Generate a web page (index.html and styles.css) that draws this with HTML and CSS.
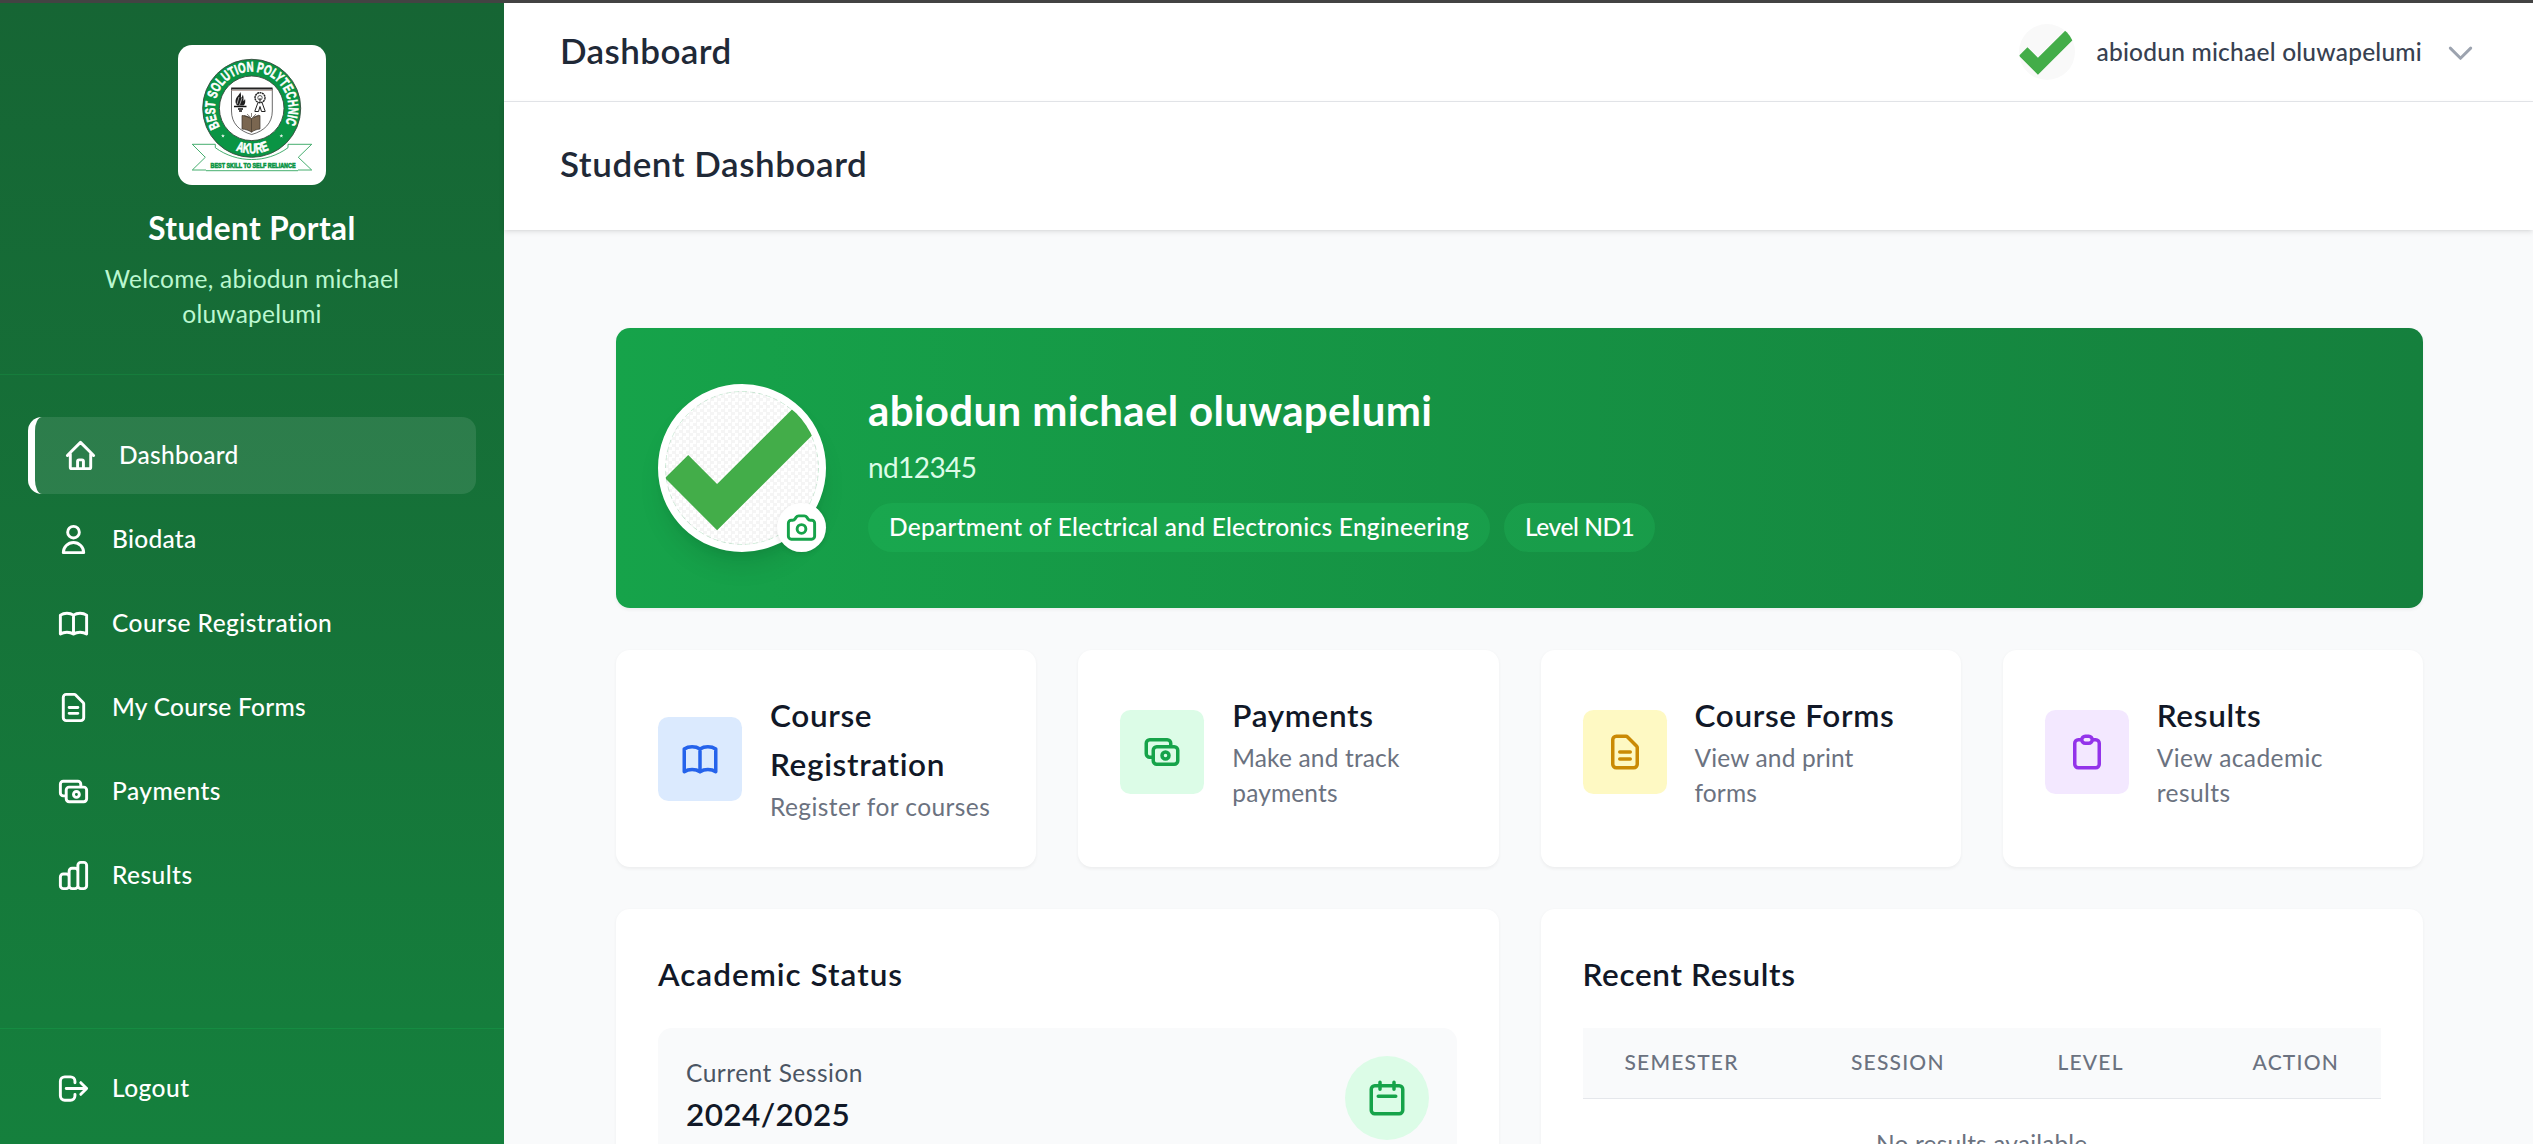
FILE: index.html
```
<!DOCTYPE html>
<html lang="en">
<head>
<meta charset="utf-8">
<title>Student Dashboard</title>
<link rel="stylesheet" href="styles.css">
</head>
<body>
<svg class="defs" aria-hidden="true">
  <symbol id="i-home" viewBox="0 0 24 24"><path d="M3 12l2-2m0 0l7-7 7 7M5 10v10a1 1 0 001 1h3m10-11l2 2m-2-2v10a1 1 0 01-1 1h-3m-6 0a1 1 0 001-1v-4a1 1 0 011-1h2a1 1 0 011 1v4a1 1 0 001 1m-6 0h6"/></symbol>
  <symbol id="i-user" viewBox="0 0 24 24"><path d="M16 7a4 4 0 11-8 0 4 4 0 018 0zM12 14a7 7 0 00-7 7h14a7 7 0 00-7-7z"/></symbol>
  <symbol id="i-book" viewBox="0 0 24 24"><path d="M12 6.253v13m0-13C10.832 5.477 9.246 5 7.5 5S4.168 5.477 3 6.253v13C4.168 18.477 5.754 18 7.5 18s3.332.477 4.5 1.253m0-13C13.168 5.477 14.754 5 16.5 5c1.747 0 3.332.477 4.5 1.253v13C19.832 18.477 18.247 18 16.5 18c-1.746 0-3.332.477-4.5 1.253"/></symbol>
  <symbol id="i-doc" viewBox="0 0 24 24"><path d="M9 12h6m-6 4h6m2 5H7a2 2 0 01-2-2V5a2 2 0 012-2h5.586a1 1 0 01.707.293l5.414 5.414a1 1 0 01.293.707V19a2 2 0 01-2 2z"/></symbol>
  <symbol id="i-cash" viewBox="0 0 24 24"><path d="M17 9V7a2 2 0 00-2-2H5a2 2 0 00-2 2v6a2 2 0 002 2h2m2 4h10a2 2 0 002-2v-6a2 2 0 00-2-2H9a2 2 0 00-2 2v6a2 2 0 002 2zm7-5a2 2 0 11-4 0 2 2 0 014 0z"/></symbol>
  <symbol id="i-chart" viewBox="0 0 24 24"><path d="M9 19v-6a2 2 0 00-2-2H5a2 2 0 00-2 2v6a2 2 0 002 2h2a2 2 0 002-2zm0 0V9a2 2 0 012-2h2a2 2 0 012 2v10m-6 0a2 2 0 002 2h2a2 2 0 002-2m0 0V5a2 2 0 012-2h2a2 2 0 012 2v14a2 2 0 01-2 2h-2a2 2 0 01-2-2z"/></symbol>
  <symbol id="i-logout" viewBox="0 0 24 24"><path d="M17 16l4-4m0 0l-4-4m4 4H7m6 4v1a3 3 0 01-3 3H6a3 3 0 01-3-3V7a3 3 0 013-3h4a3 3 0 013 3v1"/></symbol>
  <symbol id="i-camera" viewBox="0 0 24 24"><path d="M3 9a2 2 0 012-2h.93a2 2 0 001.664-.89l.812-1.22A2 2 0 0110.07 4h3.86a2 2 0 011.664.89l.812 1.22A2 2 0 0018.07 7H19a2 2 0 012 2v9a2 2 0 01-2 2H5a2 2 0 01-2-2V9z"/><path d="M15 13a3 3 0 11-6 0 3 3 0 016 0z"/></symbol>
  <symbol id="i-clipboard" viewBox="0 0 24 24"><path d="M9 5H7a2 2 0 00-2 2v12a2 2 0 002 2h10a2 2 0 002-2V7a2 2 0 00-2-2h-2M9 5a2 2 0 002 2h2a2 2 0 002-2M9 5a2 2 0 012-2h2a2 2 0 012 2"/></symbol>
  <symbol id="i-calendar" viewBox="0 0 24 24"><path d="M8 7V3m8 4V3m-9 8h10M5 21h14a2 2 0 002-2V7a2 2 0 00-2-2H5a2 2 0 00-2 2v12a2 2 0 002 2z"/></symbol>
  <symbol id="i-chevron" viewBox="0 0 24 24"><path d="M19 9l-7 7-7-7"/></symbol>
  <symbol id="i-tick" viewBox="0 0 154 154"><path d="M23.2 64L52.1 93 134 11.4 158 33.5 52.1 139.3 0 87z" fill="#43ad49" stroke="none"/></symbol>
</svg>

<div class="app">
  <aside class="sidebar">
    <div class="brand">
      <svg class="logo" viewBox="0 0 148 140" role="img" aria-label="Best Solution Polytechnic, Akure">
        <path d="M28 125.7h92M28 125L14.3 125 27.3 112.3 14.3 99.3H37.3V102.7C59 118.5 88.5 118.5 110 102.7V99.3H133.7L120.3 112.3 133.7 125H120" fill="none" stroke="#16994a" stroke-width=".8"/>
        <circle cx="73.7" cy="63.3" r="49" fill="#0a9444" stroke="#3a4a3e" stroke-width=".9"/>
        <circle cx="73.7" cy="63.3" r="32.3" fill="#fff" stroke="#3a4a3e" stroke-width=".9"/>
        <path id="arc-top" d="M41.8 81.7A36.8 36.8 0 1 1 105.6 81.7" fill="none"/>
        <path id="arc-bottom" d="M49.2 101.2A45.200 45.200 0 0 0 98.2 101.2" fill="none"/>
        <text class="logo-ring"><textPath href="#arc-top" textLength="150" lengthAdjust="spacingAndGlyphs">BEST SOLUTION POLYTECHNIC</textPath></text>
        <text class="logo-ring"><textPath href="#arc-bottom" startOffset="9.500" textLength="34" lengthAdjust="spacingAndGlyphs">AKURE</textPath></text>
        <path d="M44.9 89l.6 1.2 1.3.1-1 .9.3 1.3-1.2-.7-1.1.7.3-1.3-1-.9 1.3-.1zM103.3 89l.6 1.2 1.3.1-1 .9.3 1.3-1.2-.7-1.1.7.3-1.3-1-.9 1.3-.1z" fill="#e4f5ea"/>
        <path d="M53.5 43.5V66C53.5 78 61 86 73.7 89.5 86.5 86 94.3 78 94.3 66V43.5" fill="#fff" stroke="#444" stroke-width=".8"/>
        <path d="M53.2 43.5H94.5" stroke="#222" stroke-width="2"/>
        <path d="M53.2 45.4H94.5" stroke="#a58f86" stroke-width=".8"/>
        <path d="M62.5 47c-1 3-5 5-5 9.5 0 2 1 3.5 2 4h6c2-1.5 2-4 1.5-7-.2 1.5-1 2-1.7 2.5.5-2.5.3-5-.6-6.500-.2 2-1 3-1.8 3.5.3-2 .2-4-.4-6z" fill="#1d1d1d"/>
        <path d="M61 52l-2 7M64 53l-2.500 7" stroke="#fff" stroke-width=".6"/>
        <path d="M56 61.500h12.500M60 64h5M61 66h3" stroke="#111" stroke-width="1.600"/>
        <circle cx="82" cy="52.7" r="5" fill="none" stroke="#222" stroke-width="1.4" stroke-dasharray="2 .5"/>
        <circle cx="82" cy="52.7" r="2.2" fill="none" stroke="#333" stroke-width=".8"/>
        <path d="M82 53v5M80 57.5l-3.300 9M84 57.5l3.300 9M77 66.500h3.500l1.500-5 1.500 5H87" fill="none" stroke="#222" stroke-width="1"/>
        <path d="M64 70.5c3.500.2 7 1 9.500 3 2.500-2 5.500-2.800 8.500-3V84c-3 .3-6 1.300-8.500 3.300-2.500-2-6-3-9.500-3.300z" fill="#7a6650" stroke="#3b3228" stroke-width=".7"/>
        <path d="M73.500 73.500V87M66 70.500l6 2.500M69 69l3.800 3.500M73.500 68v4M78 69l-3.500 3.500M81 70l-5.500 2.800" stroke="#3b3228" stroke-width=".6"/>
        <text class="logo-motto" x="32.5" y="122.6" textLength="85" lengthAdjust="spacingAndGlyphs">BEST SKILL TO SELF RELIANCE</text>
      </svg>
      <h1 class="brand-title">Student Portal</h1>
      <p class="brand-sub">Welcome, abiodun michael oluwapelumi</p>
    </div>
    <nav class="nav">
      <a class="nav-item active"><svg class="icon"><use href="#i-home"/></svg><span>Dashboard</span></a>
      <a class="nav-item"><svg class="icon"><use href="#i-user"/></svg><span>Biodata</span></a>
      <a class="nav-item"><svg class="icon"><use href="#i-book"/></svg><span class="wide">Course Registration</span></a>
      <a class="nav-item"><svg class="icon"><use href="#i-doc"/></svg><span>My Course Forms</span></a>
      <a class="nav-item"><svg class="icon"><use href="#i-cash"/></svg><span class="wide">Payments</span></a>
      <a class="nav-item"><svg class="icon"><use href="#i-chart"/></svg><span class="wide">Results</span></a>
    </nav>
    <div class="sidebar-foot">
      <a class="nav-item"><svg class="icon"><use href="#i-logout"/></svg><span class="wide">Logout</span></a>
    </div>
  </aside>

  <div class="main">
    <header class="topbar">
      <h2 class="page-title">Dashboard</h2>
      <div class="account">
        <span class="avatar-sm"><svg><use href="#i-tick"/></svg></span>
        <span class="account-name">abiodun michael oluwapelumi</span>
        <svg class="icon chevron"><use href="#i-chevron"/></svg>
      </div>
    </header>
    <div class="subheader"><h2 class="page-title">Student Dashboard</h2></div>

    <main class="content">
      <section class="hero">
        <div class="avatar-wrap">
          <div class="avatar"><svg viewBox="0 0 154 154"><use href="#i-tick"/><circle class="hairline" cx="77" cy="77" r="76.500"/></svg></div>
          <span class="camera"><svg class="icon"><use href="#i-camera"/></svg></span>
        </div>
        <div class="hero-text">
          <h1 class="hero-name">abiodun michael oluwapelumi</h1>
          <p class="hero-id">nd12345</p>
          <div class="pills"><span class="pill">Department of Electrical and Electronics Engineering</span><span class="pill level">Level ND1</span></div>
        </div>
      </section>

      <section class="cards">
        <a class="card"><span class="tile blue"><svg class="icon"><use href="#i-book"/></svg></span><span class="card-text"><strong>Course Registration</strong><small class="wide">Register for courses</small></span></a>
        <a class="card"><span class="tile green"><svg class="icon"><use href="#i-cash"/></svg></span><span class="card-text"><strong>Payments</strong><small>Make and track payments</small></span></a>
        <a class="card"><span class="tile yellow"><svg class="icon"><use href="#i-doc"/></svg></span><span class="card-text"><strong>Course Forms</strong><small>View and print forms</small></span></a>
        <a class="card"><span class="tile purple"><svg class="icon"><use href="#i-clipboard"/></svg></span><span class="card-text"><strong>Results</strong><small class="wide">View academic results</small></span></a>
      </section>

      <section class="panels">
        <div class="panel">
          <h3 class="panel-title academic">Academic Status</h3>
          <div class="session">
            <div class="session-text"><p class="session-label">Current Session</p><p class="session-value">2024/2025</p></div>
            <span class="round"><svg class="icon"><use href="#i-calendar"/></svg></span>
          </div>
        </div>
        <div class="panel">
          <h3 class="panel-title">Recent Results</h3>
          <table class="results">
            <colgroup><col class="c-semester"><col class="c-session"><col class="c-level"><col></colgroup>
            <thead><tr><th>Semester</th><th>Session</th><th>Level</th><th class="right">Action</th></tr></thead>
            <tbody><tr><td colspan="4">No results available</td></tr></tbody>
          </table>
        </div>
      </section>
    </main>
  </div>
</div>
</body>
</html>
```
FILE: styles.css
```
*, *::before, *::after { box-sizing: border-box; }

html { height: 100%; overflow: hidden; }

body {
  height: 100%;
  margin: 0;
  overflow: hidden;
  border-top: 3px solid #434343;
  background: #f9fafb;
  color: #111827;
  font-family: Lato, "Noto Sans", sans-serif;
  font-size: 24.5px;
  line-height: 35px;
}

h1, h2, h3, p { margin: 0; }

.defs { display: none; }

.icon {
  flex: none;
  width: 35px;
  height: 35px;
  fill: none;
  stroke: currentColor;
  stroke-width: 2;
  stroke-linecap: round;
  stroke-linejoin: round;
}

.app { display: flex; height: 100%; overflow: hidden; }

/* Sidebar */
.sidebar {
  display: flex;
  flex: none;
  flex-direction: column;
  width: 504px;
  background: linear-gradient(to bottom, #166534, #15803d);
  color: #fff;
}

.brand {
  display: flex;
  flex-direction: column;
  align-items: center;
  padding: 42px 42px 43px;
  border-bottom: 1px solid rgba(22, 163, 74, .3);
  text-align: center;
}

.logo {
  width: 148px;
  height: 140px;
  border-radius: 14px;
  background: #fff;
}

.logo-ring {
  fill: #fff;
  font-family: "Liberation Sans Narrow", "Liberation Sans", sans-serif;
  font-size: 14px;
  font-weight: 700;
  stroke: #fff;
  stroke-width: .6px;
}

.logo-motto {
  fill: #0a9444;
  font-family: "Liberation Sans Narrow", "Liberation Sans", sans-serif;
  font-size: 7px;
  font-weight: 700;
  stroke: #0a9444;
  stroke-width: .6px;
}

.brand-title {
  margin-top: 19px;
  font-size: 31.5px;
  font-weight: 700;
  letter-spacing: .4px;
  line-height: 49px;
}

.brand-sub {
  width: 336px;
  margin-top: 8px;
  color: #bbf7d0;
  letter-spacing: .25px;
}

.nav {
  display: flex;
  flex: 1;
  flex-direction: column;
  gap: 7px;
  padding: 42px 28px;
}

.nav-item {
  display: flex;
  align-items: center;
  gap: 21px;
  height: 77px;
  padding: 0 28px;
  border-radius: 14px;
  font-weight: 500;
  letter-spacing: .27px;
}

.nav-item span { padding-bottom: 2px; }
.nav-item .wide { letter-spacing: .45px; }

.nav-item.active {
  border-left: 7px solid #fff;
  background: rgba(255, 255, 255, .1);
}

.sidebar-foot {
  height: 116px;
  padding: 21px 28px 0;
  border-top: 1px solid rgba(22, 163, 74, .4);
}

/* Top bars */
.main { flex: 1; min-width: 0; }

.topbar {
  display: flex;
  align-items: center;
  justify-content: space-between;
  height: 99px;
  padding: 0 55px 0 56px;
  border-bottom: 1px solid #e5e7eb;
  background: #fff;
}

.page-title {
  padding-bottom: 4px;
  color: #1f2937;
  font-size: 35px;
  font-weight: 600;
  letter-spacing: .55px;
  line-height: 44px;
}

.topbar .page-title { letter-spacing: .4px; }

.account { display: flex; align-items: center; gap: 21px; }

.account-name {
  padding-bottom: 1px;
  color: #374151;
  font-weight: 500;
  letter-spacing: .22px;
}

.chevron { color: #9ca3af; }

.avatar, .avatar-sm {
  overflow: hidden;
  border-radius: 50%;
  background: repeating-conic-gradient(#f5f5f5 0 25%, #fff 0 50%) 0 0 / 7px 7px;
}

.avatar-sm {
  width: 56px;
  height: 56px;
  background: #f9f9f9;
}

.avatar svg, .avatar-sm svg { display: block; width: 100%; height: 100%; }

.hairline {
  fill: none;
  stroke: #16a34a;
  stroke-width: .6;
  stroke-dasharray: 5 3;
  opacity: .35;
}

.subheader {
  position: relative;
  height: 128px;
  padding: 39px 56px 0;
  background: #fff;
  box-shadow: 0 1.75px 5.25px rgba(0, 0, 0, .1), 0 1.75px 3.5px -1.75px rgba(0, 0, 0, .1);
}

/* Content */
.content {
  display: flex;
  flex-direction: column;
  gap: 42px;
  padding: 98px 110px 0 112px;
}

.hero {
  display: flex;
  gap: 42px;
  height: 280px;
  padding: 56px 42px;
  border-radius: 14px;
  background: linear-gradient(to right, #16a34a, #15803d);
  box-shadow: 0 1.75px 3.5px rgba(0, 0, 0, .05);
  color: #fff;
}

.avatar-wrap { position: relative; flex: none; width: 168px; height: 168px; }

.avatar {
  width: 168px;
  height: 168px;
  border: 7px solid #fff;
  box-shadow: 0 17.5px 26px -5px rgba(0, 0, 0, .1), 0 7px 10.5px -7px rgba(0, 0, 0, .1);
}

.camera {
  position: absolute;
  right: 0;
  bottom: 0;
  display: flex;
  padding: 7px;
  border-radius: 50%;
  background: #fff;
  box-shadow: 0 1.75px 5.25px rgba(0, 0, 0, .1);
  color: #16a34a;
}

.hero-name {
  margin-top: -2px;
  font-size: 42px;
  font-weight: 700;
  letter-spacing: .35px;
  line-height: 56px;
}

.hero-id {
  margin-top: 8px;
  color: #dcfce7;
  font-size: 28px;
  letter-spacing: -.6px;
  line-height: 42px;
}

.pills { display: flex; gap: 14px; margin-top: 15px; }

.pill {
  padding: 6px 21px 8px;
  border-radius: 25px;
  background: rgba(34, 197, 94, .25);
  font-weight: 500;
  letter-spacing: .25px;
}

.pill.level { letter-spacing: -.45px; }

.cards {
  display: grid;
  grid-template-columns: repeat(4, 1fr);
  gap: 42px;
}

.card, .panel {
  border-radius: 14px;
  background: #fff;
  box-shadow: 0 1.75px 3.5px rgba(0, 0, 0, .05);
}

.card {
  display: flex;
  flex-wrap: wrap;
  align-content: start;
  align-items: center;
  height: 217px;
  padding: 42px;
}

.tile {
  display: flex;
  align-items: center;
  justify-content: center;
  width: 84px;
  height: 84px;
  border-radius: 10.5px;
}

.tile .icon, .round .icon { width: 42px; height: 42px; }

.blue { background: #dbeafe; color: #2563eb; }
.green { background: #dcfce7; color: #16a34a; }
.yellow { background: #fef9c3; color: #ca8a04; }
.purple { background: #f3e8ff; color: #9333ea; }

.card-text {
  display: flex;
  flex: 1;
  flex-direction: column;
  min-width: 0;
  margin: -1px 0 1px 28px;
}

.card-text strong, .panel-title {
  font-size: 31.5px;
  font-weight: 600;
  letter-spacing: .65px;
  line-height: 49px;
}

.card-text small {
  color: #6b7280;
  font-size: 24.5px;
  letter-spacing: .15px;
}

.card-text .wide { letter-spacing: .42px; }

.panels {
  display: grid;
  grid-template-columns: 1fr 1fr;
  gap: 42px;
}

.panel { height: 420px; padding: 41px 42px; }

.panel-title { margin-bottom: 29px; }
.panel-title.academic { letter-spacing: 1px; }

.session {
  display: flex;
  align-items: center;
  justify-content: space-between;
  padding: 28px;
  border-radius: 14px;
  background: #f9fafb;
}

.session-text { margin: -1px 0 1px; }

.session-label { color: #4b5563; letter-spacing: .5px; }

.session-value {
  font-size: 31.5px;
  font-weight: 600;
  letter-spacing: .4px;
  line-height: 49px;
}

.round {
  display: flex;
  align-items: center;
  justify-content: center;
  width: 84px;
  height: 84px;
  border-radius: 50%;
  background: #dcfce7;
  color: #16a34a;
}

.results {
  width: 100%;
  table-layout: fixed;
  border-spacing: 0;
}

.c-semester { width: 226.5px; }
.c-session { width: 206.5px; }
.c-level { width: 177px; }

.results th {
  padding: 20px 42px 22px;
  border-bottom: 1px solid #e5e7eb;
  background: #f9fafb;
  color: #6b7280;
  font-size: 21px;
  font-weight: 500;
  letter-spacing: 1.2px;
  line-height: 28px;
  text-align: left;
  text-transform: uppercase;
}

.results th.right { text-align: right; }

.results td {
  padding: 27px 42px;
  color: #6b7280;
  letter-spacing: .15px;
  text-align: center;
}
```
